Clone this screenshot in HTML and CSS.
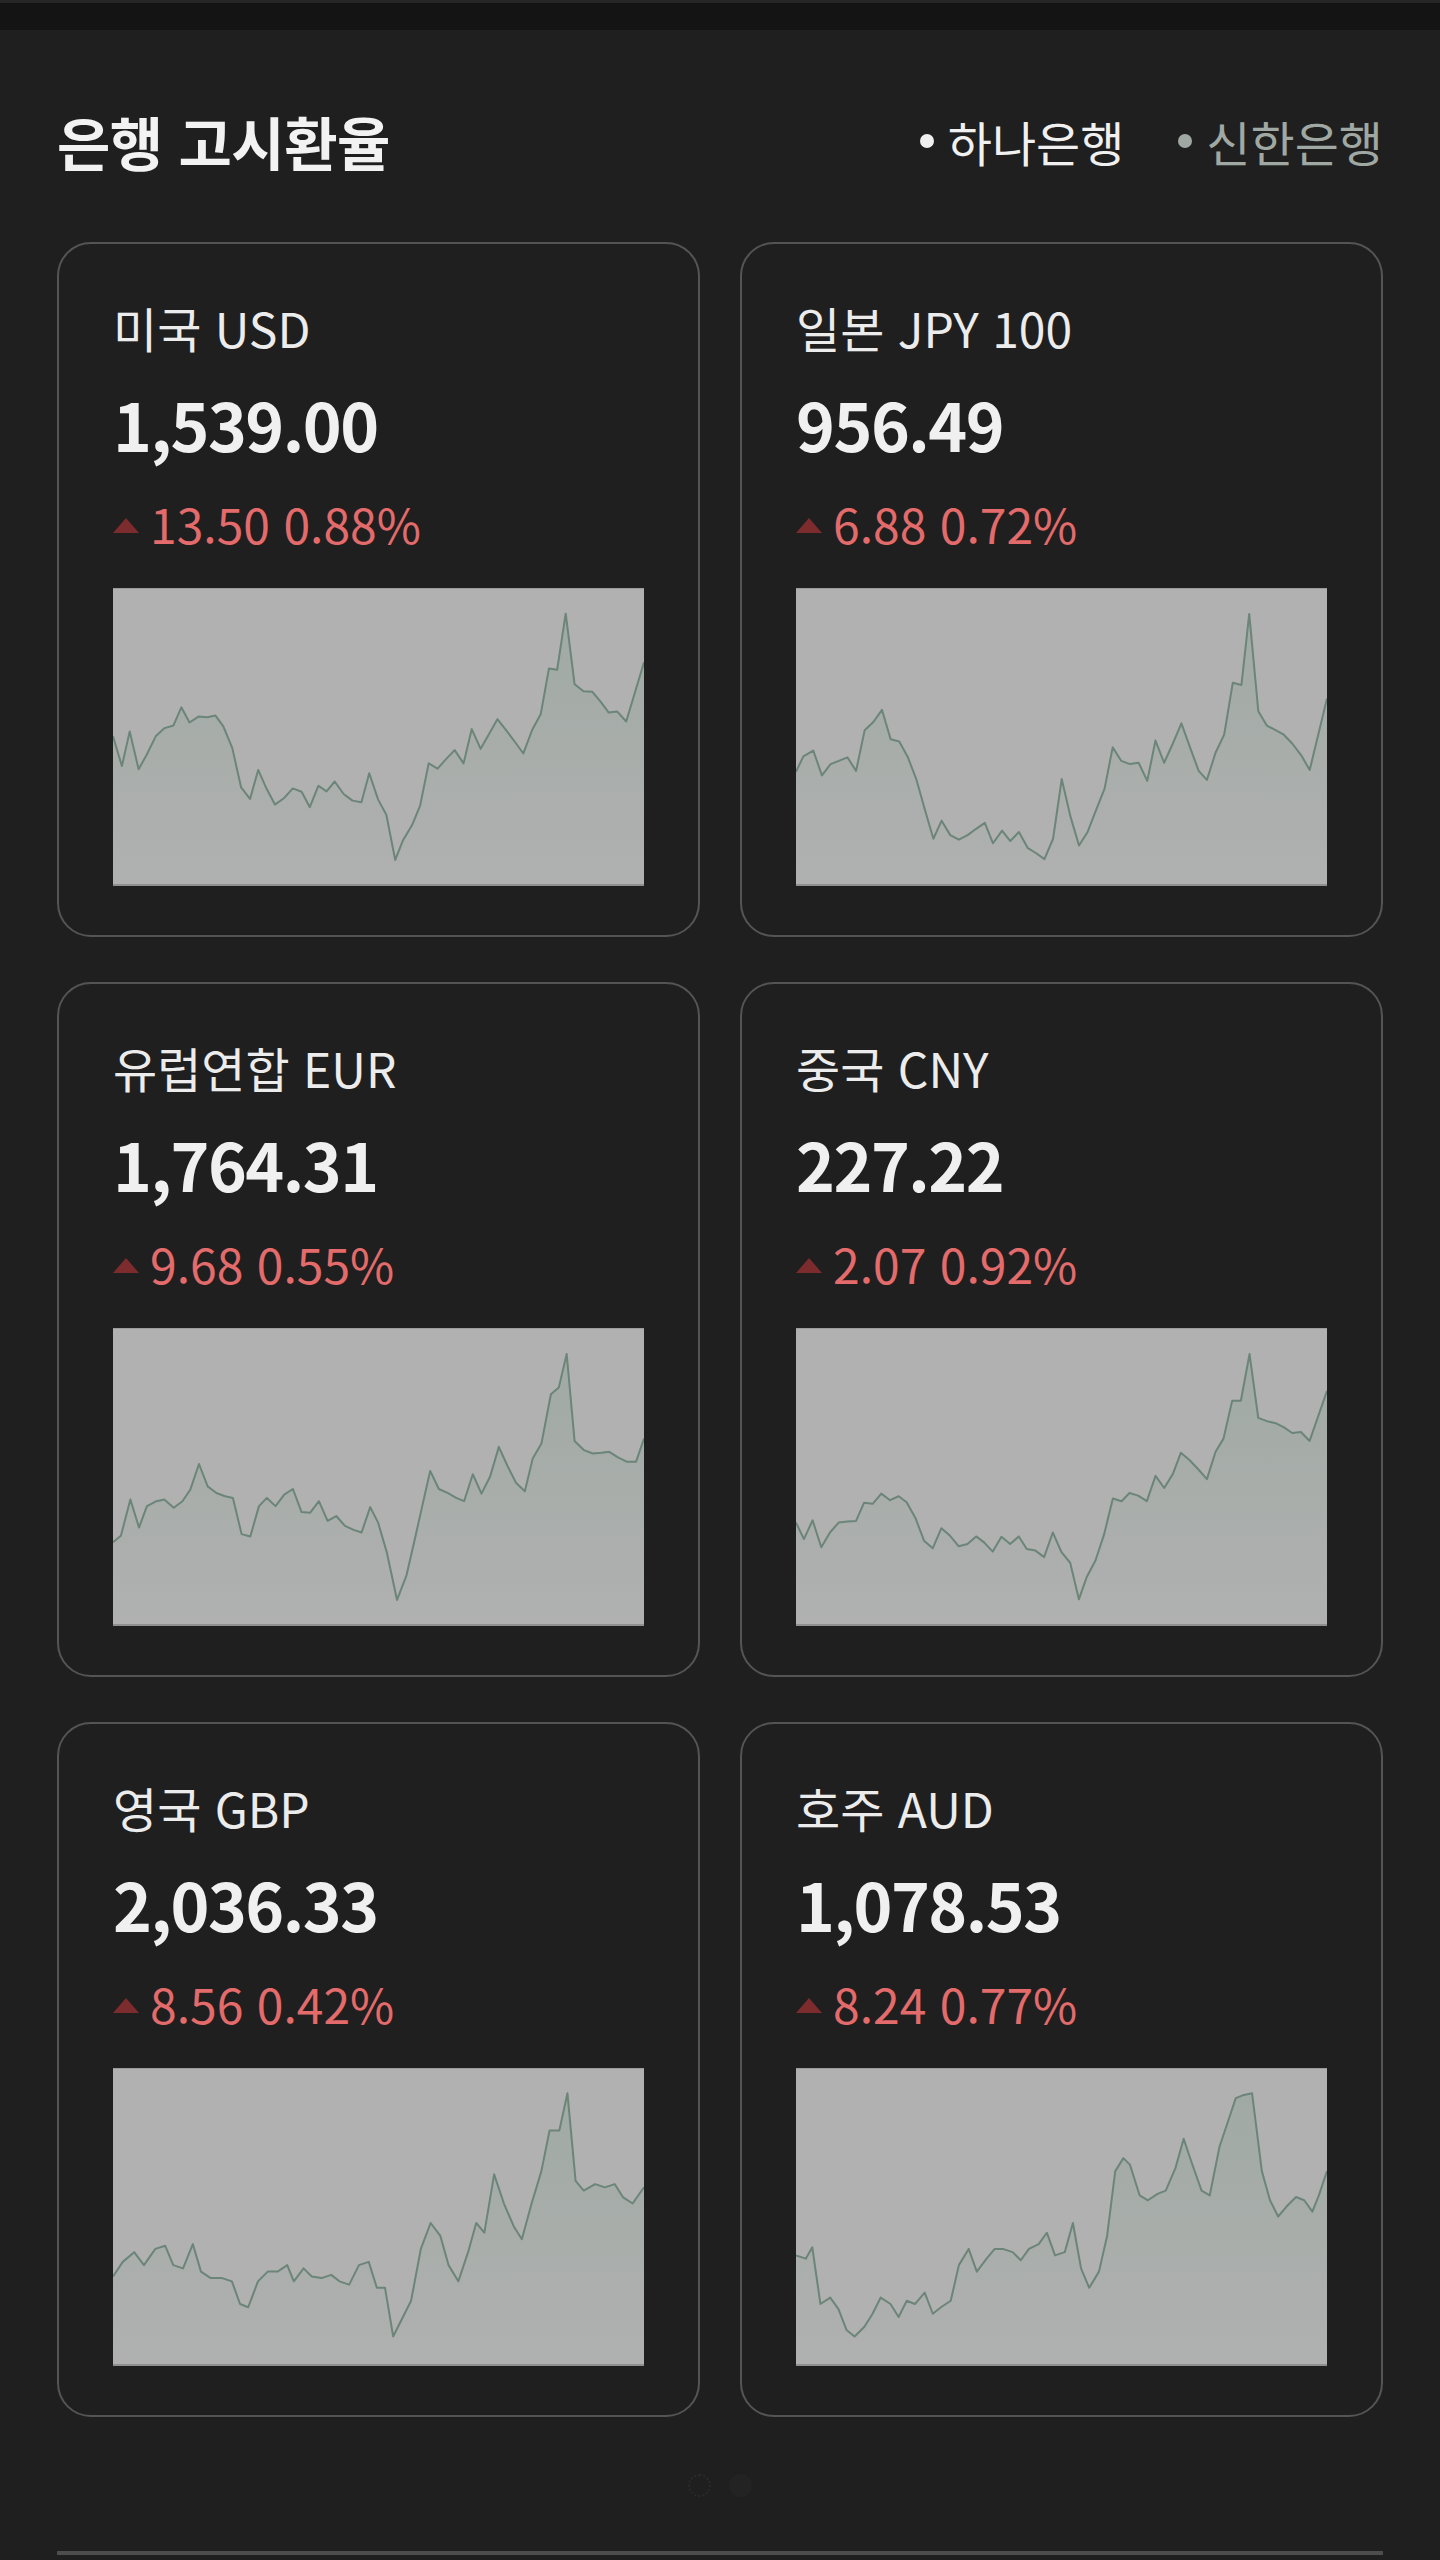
FILE: index.html
```html
<!DOCTYPE html>
<html lang="ko">
<head>
    <meta charset="UTF-8">
    <meta name="viewport" content="width=device-width, initial-scale=1.0">
    <title>은행 고시환율</title>
    <link rel="stylesheet" href="styles.css">
</head>
<body>
    <div class="topbar"></div>

    <main class="page">
        <header class="header">
            <h2>은행 고시환율</h2>
            <ul class="banks">
                <li class="bank active">하나은행</li>
                <li class="bank">신한은행</li>
            </ul>
        </header>

        <section class="rates">
            <!-- 미국 -->
            <div class="rate-card">
                <div class="rate-name">미국 USD</div>
                <div class="rate-value">1,539.00</div>
                <div class="rate-change"><span class="arrow"></span>13.50 0.88%</div>
                <div class="chart">
                    <svg viewBox="35 83 1492 895" preserveAspectRatio="none">
                        <defs>
                            <linearGradient id="fill1" x1="0" y1="0" x2="0" y2="1">
                                <stop offset="0" stop-color="#809c8d" stop-opacity="0.35"/>
                                <stop offset="1" stop-color="#809c8d" stop-opacity="0.02"/>
                            </linearGradient>
                        </defs>
                        <polygon class="area" fill="url(#fill1)" points="35,530 60,620 82,515 107,630 130,585 155,530 180,505 205,497 227,442 250,488 275,470 300,472 323,467 345,500 370,565 395,685 420,720 443,632 467,690 490,737 515,718 540,688 565,698 588,745 612,680 635,697 658,667 683,705 708,725 733,730 755,642 780,722 803,768 828,905 850,845 875,800 898,740 922,612 947,628 970,600 995,572 1020,612 1043,508 1068,568 1092,522 1115,478 1140,512 1165,548 1188,582 1213,510 1237,462 1260,324 1283,328 1307,158 1332,372 1357,393 1382,395 1405,425 1428,458 1452,455 1477,485 1527,305 1527,978 35,978"/>
                        <polyline class="line" points="35,530 60,620 82,515 107,630 130,585 155,530 180,505 205,497 227,442 250,488 275,470 300,472 323,467 345,500 370,565 395,685 420,720 443,632 467,690 490,737 515,718 540,688 565,698 588,745 612,680 635,697 658,667 683,705 708,725 733,730 755,642 780,722 803,768 828,905 850,845 875,800 898,740 922,612 947,628 970,600 995,572 1020,612 1043,508 1068,568 1092,522 1115,478 1140,512 1165,548 1188,582 1213,510 1237,462 1260,324 1283,328 1307,158 1332,372 1357,393 1382,395 1405,425 1428,458 1452,455 1477,485 1527,305"/>
                    </svg>
                </div>
            </div>

            <!-- 일본 -->
            <div class="rate-card">
                <div class="rate-name">일본 JPY 100</div>
                <div class="rate-value">956.49</div>
                <div class="rate-change"><span class="arrow"></span>6.88 0.72%</div>
                <div class="chart">
                    <svg viewBox="173 778 1229 652" preserveAspectRatio="none">
                        <defs>
                            <linearGradient id="fill2" x1="0" y1="0" x2="0" y2="1">
                                <stop offset="0" stop-color="#809c8d" stop-opacity="0.35"/>
                                <stop offset="1" stop-color="#809c8d" stop-opacity="0.02"/>
                            </linearGradient>
                        </defs>
                        <polygon class="area" fill="url(#fill2)" points="173,1182 190,1148 213,1135 233,1190 253,1165 272,1158 292,1150 312,1180 332,1090 352,1072 372,1045 392,1110 412,1115 432,1150 452,1200 472,1268 491,1330 510,1290 530,1322 550,1332 570,1322 590,1308 610,1295 629,1340 650,1312 669,1335 689,1315 709,1350 729,1362 748,1375 768,1330 788,1198 808,1280 828,1345 848,1315 867,1268 887,1220 906,1128 926,1158 946,1165 966,1162 986,1202 1005,1113 1025,1162 1045,1120 1065,1075 1085,1128 1105,1180 1124,1200 1144,1140 1164,1100 1184,985 1204,990 1222,833 1243,1048 1263,1080 1283,1090 1302,1100 1322,1120 1342,1145 1362,1178 1402,1020 1402,1430 173,1430"/>
                        <polyline class="line" points="173,1182 190,1148 213,1135 233,1190 253,1165 272,1158 292,1150 312,1180 332,1090 352,1072 372,1045 392,1110 412,1115 432,1150 452,1200 472,1268 491,1330 510,1290 530,1322 550,1332 570,1322 590,1308 610,1295 629,1340 650,1312 669,1335 689,1315 709,1350 729,1362 748,1375 768,1330 788,1198 808,1280 828,1345 848,1315 867,1268 887,1220 906,1128 926,1158 946,1165 966,1162 986,1202 1005,1113 1025,1162 1045,1120 1065,1075 1085,1128 1105,1180 1124,1200 1144,1140 1164,1100 1184,985 1204,990 1222,833 1243,1048 1263,1080 1283,1090 1302,1100 1322,1120 1342,1145 1362,1178 1402,1020"/>
                    </svg>
                </div>
            </div>

            <!-- 유럽연합 -->
            <div class="rate-card">
                <div class="rate-name">유럽연합 EUR</div>
                <div class="rate-value">1,764.31</div>
                <div class="rate-change"><span class="arrow"></span>9.68 0.55%</div>
                <div class="chart">
                    <svg viewBox="15 22 673 896" preserveAspectRatio="none">
                        <defs>
                            <linearGradient id="fill3" x1="0" y1="0" x2="0" y2="1">
                                <stop offset="0" stop-color="#809c8d" stop-opacity="0.35"/>
                                <stop offset="1" stop-color="#809c8d" stop-opacity="0.02"/>
                            </linearGradient>
                        </defs>
                        <polygon class="area" fill="url(#fill3)" points="15,670 25,650 37,540 48,625 58,560 70,545 80,540 92,565 103,545 113,510 124,432 135,500 146,520 157,530 167,535 178,645 189,652 200,560 210,535 221,560 232,525 243,508 254,578 265,580 276,545 287,605 298,590 309,620 320,632 330,640 341,563 351,610 362,700 375,845 387,770 398,655 417,453 428,508 439,520 450,535 460,545 471,463 482,522 493,470 504,380 515,438 526,490 537,515 547,415 558,370 570,220 580,200 590,98 600,362 612,390 623,400 634,398 644,395 655,412 666,425 678,425 688,355 688,918 15,918"/>
                        <polyline class="line" points="15,670 25,650 37,540 48,625 58,560 70,545 80,540 92,565 103,545 113,510 124,432 135,500 146,520 157,530 167,535 178,645 189,652 200,560 210,535 221,560 232,525 243,508 254,578 265,580 276,545 287,605 298,590 309,620 320,632 330,640 341,563 351,610 362,700 375,845 387,770 398,655 417,453 428,508 439,520 450,535 460,545 471,463 482,522 493,470 504,380 515,438 526,490 537,515 547,415 558,370 570,220 580,200 590,98 600,362 612,390 623,400 634,398 644,395 655,412 666,425 678,425 688,355"/>
                    </svg>
                </div>
            </div>

            <!-- 중국 -->
            <div class="rate-card">
                <div class="rate-name">중국 CNY</div>
                <div class="rate-value">227.22</div>
                <div class="rate-change"><span class="arrow"></span>2.07 0.92%</div>
                <div class="chart">
                    <svg viewBox="880 22 672 896" preserveAspectRatio="none">
                        <defs>
                            <linearGradient id="fill4" x1="0" y1="0" x2="0" y2="1">
                                <stop offset="0" stop-color="#809c8d" stop-opacity="0.35"/>
                                <stop offset="1" stop-color="#809c8d" stop-opacity="0.02"/>
                            </linearGradient>
                        </defs>
                        <polygon class="area" fill="url(#fill4)" points="880,610 890,660 901,603 912,685 923,640 934,610 945,607 956,605 966,550 977,553 988,522 999,542 1010,530 1020,548 1031,595 1042,665 1053,688 1064,627 1075,650 1086,682 1097,675 1108,652 1118,670 1129,698 1140,653 1151,675 1162,652 1172,690 1183,695 1194,715 1205,640 1216,700 1227,732 1238,843 1248,775 1259,725 1270,645 1281,537 1292,545 1302,520 1313,528 1324,545 1335,468 1346,505 1357,462 1367,398 1378,420 1389,448 1400,478 1411,395 1421,355 1432,240 1443,240 1454,98 1465,292 1476,302 1487,308 1497,320 1508,338 1519,335 1530,362 1552,210 1552,918 880,918"/>
                        <polyline class="line" points="880,610 890,660 901,603 912,685 923,640 934,610 945,607 956,605 966,550 977,553 988,522 999,542 1010,530 1020,548 1031,595 1042,665 1053,688 1064,627 1075,650 1086,682 1097,675 1108,652 1118,670 1129,698 1140,653 1151,675 1162,652 1172,690 1183,695 1194,715 1205,640 1216,700 1227,732 1238,843 1248,775 1259,725 1270,645 1281,537 1292,545 1302,520 1313,528 1324,545 1335,468 1346,505 1357,462 1367,398 1378,420 1389,448 1400,478 1411,395 1421,355 1432,240 1443,240 1454,98 1465,292 1476,302 1487,308 1497,320 1508,338 1519,335 1530,362 1552,210"/>
                    </svg>
                </div>
            </div>

            <!-- 영국 -->
            <div class="rate-card">
                <div class="rate-name">영국 GBP</div>
                <div class="rate-value">2,036.33</div>
                <div class="rate-change"><span class="arrow"></span>8.56 0.42%</div>
                <div class="chart">
                    <svg viewBox="69 1267 326 182" preserveAspectRatio="none">
                        <defs>
                            <linearGradient id="fill5" x1="0" y1="0" x2="0" y2="1">
                                <stop offset="0" stop-color="#809c8d" stop-opacity="0.35"/>
                                <stop offset="1" stop-color="#809c8d" stop-opacity="0.02"/>
                            </linearGradient>
                        </defs>
                        <polygon class="area" fill="url(#fill5)" points="69,1395 75,1386 82,1380 88,1388 95,1378 101,1376 106,1388 112,1390 118,1375 123,1392 129,1396 136,1396 142,1398 147,1412 152,1414 158,1398 164,1392 170,1392 176,1388 180,1398 186,1390 191,1395 197,1396 203,1394 208,1398 214,1400 220,1388 226,1386 231,1402 236,1402 241,1432 246,1422 252,1410 258,1378 264,1362 270,1370 275,1388 281,1398 287,1380 292,1362 297,1368 303,1332 309,1350 315,1364 320,1372 326,1350 332,1330 337,1305 343,1305 348,1282 353,1336 358,1342 365,1338 371,1340 377,1338 382,1346 388,1350 395,1340 395,1449 69,1449"/>
                        <polyline class="line" points="69,1395 75,1386 82,1380 88,1388 95,1378 101,1376 106,1388 112,1390 118,1375 123,1392 129,1396 136,1396 142,1398 147,1412 152,1414 158,1398 164,1392 170,1392 176,1388 180,1398 186,1390 191,1395 197,1396 203,1394 208,1398 214,1400 220,1388 226,1386 231,1402 236,1402 241,1432 246,1422 252,1410 258,1378 264,1362 270,1370 275,1388 281,1398 287,1380 292,1362 297,1368 303,1332 309,1350 315,1364 320,1372 326,1350 332,1330 337,1305 343,1305 348,1282 353,1336 358,1342 365,1338 371,1340 377,1338 382,1346 388,1350 395,1340"/>
                    </svg>
                </div>
            </div>

            <!-- 호주 -->
            <div class="rate-card">
                <div class="rate-name">호주 AUD</div>
                <div class="rate-value">1,078.53</div>
                <div class="rate-change"><span class="arrow"></span>8.24 0.77%</div>
                <div class="chart">
                    <svg viewBox="487 1267 326 182" preserveAspectRatio="none">
                        <defs>
                            <linearGradient id="fill6" x1="0" y1="0" x2="0" y2="1">
                                <stop offset="0" stop-color="#809c8d" stop-opacity="0.35"/>
                                <stop offset="1" stop-color="#809c8d" stop-opacity="0.02"/>
                            </linearGradient>
                        </defs>
                        <polygon class="area" fill="url(#fill6)" points="487,1382 493,1384 497,1377 502,1412 508,1408 513,1415 518,1428 523,1432 529,1426 534,1418 539,1408 545,1412 550,1420 555,1410 560,1412 566,1405 571,1418 576,1414 582,1410 587,1388 593,1378 598,1392 604,1384 609,1378 614,1378 620,1380 625,1385 630,1378 636,1375 641,1368 646,1382 652,1380 657,1362 662,1390 667,1402 673,1392 678,1370 683,1330 688,1322 692,1326 698,1345 703,1348 709,1344 714,1342 720,1328 725,1310 730,1325 736,1342 741,1345 747,1315 752,1300 757,1285 762,1283 767,1282 773,1330 778,1348 783,1358 788,1352 794,1346 799,1348 804,1355 808,1345 813,1330 813,1449 487,1449"/>
                        <polyline class="line" points="487,1382 493,1384 497,1377 502,1412 508,1408 513,1415 518,1428 523,1432 529,1426 534,1418 539,1408 545,1412 550,1420 555,1410 560,1412 566,1405 571,1418 576,1414 582,1410 587,1388 593,1378 598,1392 604,1384 609,1378 614,1378 620,1380 625,1385 630,1378 636,1375 641,1368 646,1382 652,1380 657,1362 662,1390 667,1402 673,1392 678,1370 683,1330 688,1322 692,1326 698,1345 703,1348 709,1344 714,1342 720,1328 725,1310 730,1325 736,1342 741,1345 747,1315 752,1300 757,1285 762,1283 767,1282 773,1330 778,1348 783,1358 788,1352 794,1346 799,1348 804,1355 808,1345 813,1330"/>
                    </svg>
                </div>
            </div>
        </section>

        <div class="pager">
            <span class="pager-dot current"></span>
            <span class="pager-dot"></span>
        </div>

        <div class="divider"></div>
    </main>
</body>
</html>
```

FILE: styles.css
```css
* {
    box-sizing: border-box;
}
body {
    font-family: 'Noto Sans CJK KR', 'Noto Sans', sans-serif;
    background: #1f1f1f;
    color: #eeeeee;
    margin: 0;
}
.topbar {
    height: 30px;
    background: #141414;
    border-top: 3px solid #262626;
}
.page {
    padding: 0 57px;
}
.header {
    height: 212px;
    padding-top: 10px;
    display: flex;
    justify-content: space-between;
    align-items: center;
}
h2 {
    margin: 0;
    font-size: 58px;
    font-weight: 700;
    color: #f2f2f2;
    letter-spacing: -0.5px;
}
.banks {
    list-style: none;
    margin: 0;
    padding: 0;
    display: flex;
    gap: 54px;
}
.bank {
    display: flex;
    align-items: center;
    gap: 14px;
    font-size: 48px;
    color: #a0a8a3;
}
.bank::before {
    content: '';
    width: 14px;
    height: 14px;
    border-radius: 50%;
    background: #a0a8a3;
}
.bank.active {
    color: #f0f0f0;
}
.bank.active::before {
    background: #f0f0f0;
}
.rates {
    display: grid;
    grid-template-columns: 1fr 1fr;
    column-gap: 40px;
    row-gap: 45px;
}
.rate-card {
    height: 695px;
    border: 2px solid #545454;
    border-radius: 34px;
    padding: 55px 54px 0;
}
.rate-name {
    font-size: 48px;
    line-height: 1.2;
    color: #ececec;
}
.rate-value {
    margin-top: 27px;
    font-size: 66px;
    line-height: 1.2;
    font-weight: 700;
    letter-spacing: -1.5px;
    color: #f0f0f0;
}
.rate-change {
    margin-top: 32px;
    font-size: 48px;
    line-height: 1.2;
    color: #e36b6b;
    display: flex;
    align-items: center;
}
.arrow {
    width: 0;
    height: 0;
    border-left: 13px solid transparent;
    border-right: 13px solid transparent;
    border-bottom: 15px solid #7c2c2c;
    margin-right: 11px;
    margin-top: 4px;
}
.chart {
    margin-top: 36px;
    height: 298px;
    background: #b1b1b1;
    border-top: 1px solid #9c9c9c;
    border-bottom: 2px solid #8f8f8f;
}
.chart svg {
    display: block;
    width: 100%;
    height: 100%;
}
.chart .line {
    fill: none;
    stroke: #6b8579;
    stroke-width: 2;
    stroke-linejoin: round;
    vector-effect: non-scaling-stroke;
}
.pager {
    display: flex;
    justify-content: center;
    gap: 18px;
    margin-top: 57px;
}
.pager-dot {
    width: 23px;
    height: 23px;
    border-radius: 50%;
    background: #232323;
}
.pager-dot.current {
    background: none;
    border: 2px dotted #2a2a2a;
}
.divider {
    margin-top: 54px;
    height: 4px;
    background: #4d4d4d;
}
```
